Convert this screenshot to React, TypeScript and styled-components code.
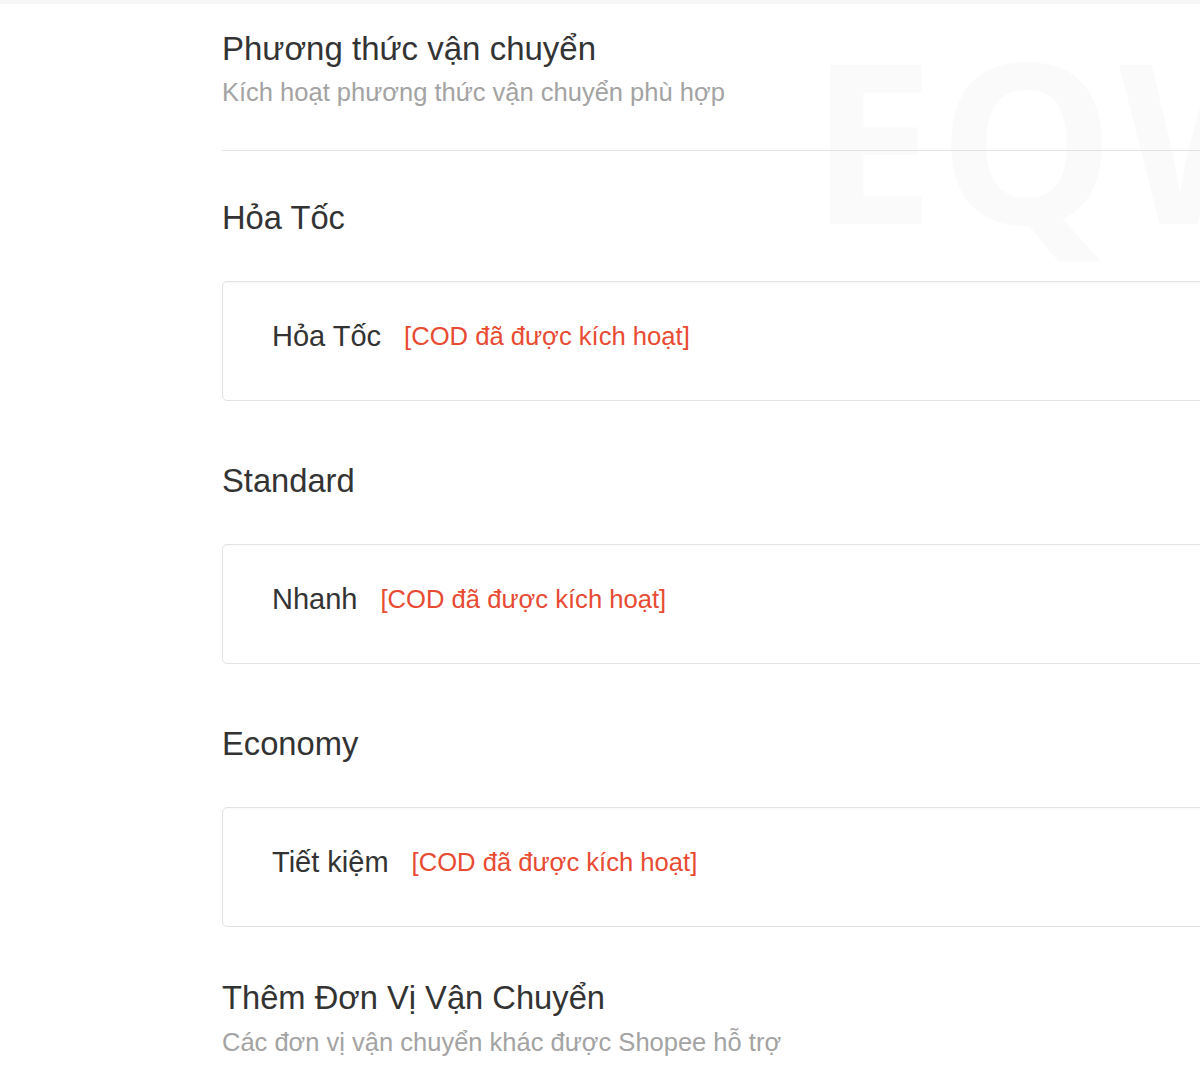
import React from "react";
import styled, { createGlobalStyle } from "styled-components";

const GlobalStyle = createGlobalStyle`
  html, body {
    margin: 0;
    padding: 0;
    background: #ffffff;
    font-family: "Liberation Sans", Arial, sans-serif;
    overflow: hidden;
  }
`;

const Page = styled.div`
  position: relative;
  width: 1200px;
  height: 1080px;
  overflow: hidden;
  background: #fff;
  border-top: 4px solid #f6f6f6;
  box-sizing: border-box;
`;

const Watermark = styled.div`
  position: absolute;
  left: 810px;
  top: 1px;
  font-family: "Open Sans", "Liberation Sans", sans-serif;
  font-weight: 700;
  font-size: 222px;
  line-height: 1.2;
  letter-spacing: 4px;
  color: rgba(0, 0, 0, 0.02);
  pointer-events: none;
  white-space: nowrap;
`;

const Content = styled.div`
  padding-left: 222px;
  display: flex;
  flex-direction: column;
`;

const Header = styled.header`
  padding-top: 25px;
  padding-bottom: 42px;
  border-bottom: 1px solid #e4e4e4;
  display: flex;
  flex-direction: column;
  gap: 7px;
`;

const Title = styled.h1`
  margin: 0;
  font-size: 33px;
  line-height: 40px;
  font-weight: 400;
  color: #333;
`;

const Subtitle = styled.p`
  margin: 0;
  font-size: 25.5px;
  line-height: 32px;
  color: #a3a3a3;
`;

const Section = styled.section<{ $top: number }>`
  margin-top: ${(p) => p.$top}px;
  display: flex;
  flex-direction: column;
  gap: 43px;
`;

const SectionTitle = styled.h2`
  margin: 0;
  font-size: 32.7px;
  line-height: 40px;
  font-weight: 400;
  color: #333;
`;

const Card = styled.div`
  height: 120px;
  box-sizing: border-box;
  margin-right: -20px;
  border: 1px solid #e3e3e3;
  border-radius: 5px;
  box-shadow: inset 0 1px 2px rgba(0, 0, 0, 0.03);
  padding: 0 0 10px 49px;
  display: flex;
  align-items: center;
  gap: 23px;
`;

const CarrierName = styled.span`
  font-size: 29px;
  color: #333;
`;

const CodTag = styled.span`
  font-size: 25.6px;
  color: #e84a32;
`;

const Footer = styled.div`
  margin-top: 51px;
  display: flex;
  flex-direction: column;
  gap: 8px;
`;

const groups = [
  { title: "Hỏa Tốc", name: "Hỏa Tốc", top: 47 },
  { title: "Standard", name: "Nhanh", top: 60 },
  { title: "Economy", name: "Tiết kiệm", top: 60 },
];

export default function App() {
  return (
    <>
      <GlobalStyle />
      <Page>
        <Content>
          <Header>
            <Title>Phương thức vận chuyển</Title>
            <Subtitle>Kích hoạt phương thức vận chuyển phù hợp</Subtitle>
          </Header>
          {groups.map((g) => (
            <Section key={g.title} $top={g.top}>
              <SectionTitle>{g.title}</SectionTitle>
              <Card>
                <CarrierName>{g.name}</CarrierName>
                <CodTag>[COD đã được kích hoạt]</CodTag>
              </Card>
            </Section>
          ))}
          <Footer>
            <SectionTitle>Thêm Đơn Vị Vận Chuyển</SectionTitle>
            <Subtitle>Các đơn vị vận chuyển khác được Shopee hỗ trợ</Subtitle>
          </Footer>
        </Content>
        <Watermark aria-hidden="true">EQW</Watermark>
      </Page>
    </>
  );
}
